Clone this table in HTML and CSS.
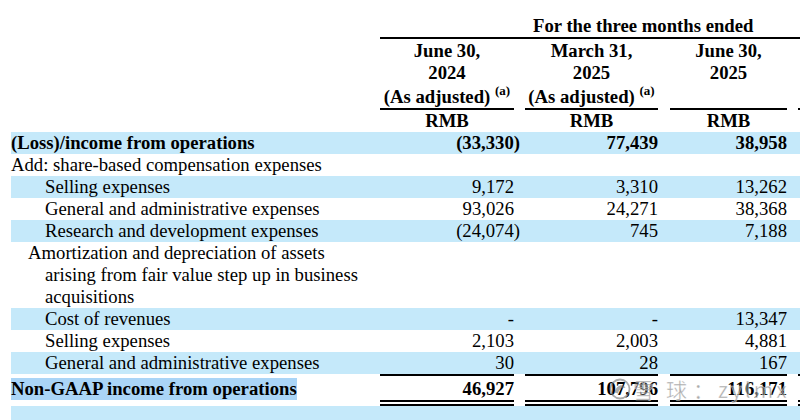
FILE: index.html
```html
<!DOCTYPE html>
<html>
<head>
<meta charset="utf-8">
<link rel="stylesheet" href="styles.css">
</head>
<body>
<div class="page">
<table class="fin">
  <colgroup>
    <col class="w-label"><col class="w-c1"><col class="w-g1"><col class="w-c2"><col class="w-g2"><col class="w-c3"><col class="w-g3"><col class="w-c4">
  </colgroup>
  <tr class="h-top">
    <td></td>
    <td colspan="7" class="period">For the three months ended</td>
  </tr>
  <tr class="h-dates">
    <td></td>
    <td class="hd">June 30,<br>2024<div class="adj">(As adjusted) <sup>(a)</sup></div></td>
    <td></td>
    <td class="hd">March 31,<br>2025<div class="adj">(As adjusted) <sup>(a)</sup></div></td>
    <td></td>
    <td class="hd">June 30,<br>2025<div class="adj">&nbsp;</div></td>
    <td></td>
    <td class="hd"></td>
  </tr>
  <tr class="h-cur">
    <td></td><td class="cur">RMB</td><td></td><td class="cur">RMB</td><td></td><td class="cur">RMB</td><td></td><td></td>
  </tr>
  <tr class="band bold">
    <td class="lbl">(Loss)/income from operations</td>
    <td class="num">(33,330<span class="rp">)</span></td><td></td>
    <td class="num">77,439</td><td></td>
    <td class="num">38,958</td><td></td><td></td>
  </tr>
  <tr>
    <td class="lbl">Add: share-based compensation expenses</td>
    <td></td><td></td><td></td><td></td><td></td><td></td><td></td>
  </tr>
  <tr class="band">
    <td class="lbl l2">Selling expenses</td>
    <td class="num">9,172</td><td></td>
    <td class="num">3,310</td><td></td>
    <td class="num">13,262</td><td></td><td></td>
  </tr>
  <tr>
    <td class="lbl l2">General and administrative expenses</td>
    <td class="num">93,026</td><td></td>
    <td class="num">24,271</td><td></td>
    <td class="num">38,368</td><td></td><td></td>
  </tr>
  <tr class="band">
    <td class="lbl l2">Research and development expenses</td>
    <td class="num">(24,074<span class="rp">)</span></td><td></td>
    <td class="num">745</td><td></td>
    <td class="num">7,188</td><td></td><td></td>
  </tr>
  <tr>
    <td class="lbl l1">Amortization and depreciation of assets<br>arising from fair value step up in business<br>acquisitions</td>
    <td></td><td></td><td></td><td></td><td></td><td></td><td></td>
  </tr>
  <tr class="band">
    <td class="lbl l2">Cost of revenues</td>
    <td class="num">-</td><td></td>
    <td class="num">-</td><td></td>
    <td class="num">13,347</td><td></td><td></td>
  </tr>
  <tr>
    <td class="lbl l2">Selling expenses</td>
    <td class="num">2,103</td><td></td>
    <td class="num">2,003</td><td></td>
    <td class="num">4,881</td><td></td><td></td>
  </tr>
  <tr class="band">
    <td class="lbl l2">General and administrative expenses</td>
    <td class="num">30</td><td></td>
    <td class="num">28</td><td></td>
    <td class="num">167</td><td></td><td></td>
  </tr>
  <tr class="total bold">
    <td class="lbl"><div class="sel">Non-GAAP income from operations</div></td>
    <td class="num">46,927</td><td></td>
    <td class="num">107,796</td><td></td>
    <td class="num">116,171</td><td></td>
    <td class="num"></td>
  </tr>
  <tr class="band">
    <td class="lbl">&nbsp;</td><td></td><td></td><td></td><td></td><td></td><td></td><td></td>
  </tr>
</table>
<div class="wm">
  <svg class="wm-logo" width="22" height="22" viewBox="0 0 22 22"><circle cx="11" cy="11" r="9.5" fill="none" stroke="currentColor" stroke-width="1.8"/><path d="M5.5 14.5 C7.5 6.5, 14.5 5.5, 16.5 10 C13 9, 10 11, 9 15.5 Z" fill="currentColor"/></svg>
  <span class="wm-cn">雪球</span><span class="wm-colon">：</span><span class="wm-id">zylmx</span>
</div>
</div>
</body>
</html>
```
FILE: styles.css
```css
html, body {
  margin: 0;
  padding: 0;
  background: #ffffff;
  overflow: hidden;
}
.page {
  position: relative;
  width: 800px;
  height: 420px;
  overflow: hidden;
  padding-left: 11px;
  box-sizing: border-box;
}
.fin {
  border-collapse: separate;
  border-spacing: 0;
  table-layout: fixed;
  width: 789px;
  font-family: "Liberation Serif", "Times New Roman", serif;
  font-size: 18.7px;
  line-height: 22px;
  color: #000;
}
.fin td {
  padding: 0;
  white-space: nowrap;
  vertical-align: top;
}
.w-label { width: 369px; }
.w-c1 { width: 134px; }
.w-g1 { width: 11px; }
.w-c2 { width: 133px; }
.w-g2 { width: 12px; }
.w-c3 { width: 117px; }
.w-g3 { width: 11px; }
.w-c4 { width: 2px; }

.period {
  font-weight: bold;
  padding: 15px 0 0 153px !important;
  border-bottom: 2px solid #000;
}
.hd {
  font-weight: bold;
  text-align: center;
  border-bottom: 2px solid #000;
  padding-top: 1px !important;
}
.adj {
  margin-top: 2px;
  height: 22px;
}
sup {
  font-size: 13px;
  line-height: 0;
  vertical-align: 8px;
}
.cur {
  font-weight: bold;
  text-align: center;
}
.band td {
  background: #c5e9fa;
}
.bold td {
  font-weight: bold;
}
.num {
  text-align: right;
}
.rp {
  margin-right: -6px;
}
.l1 {
  padding-left: 34px !important;
  text-indent: -17px;
}
.l2 {
  padding-left: 34px !important;
}
.total .num {
  border-top: 2px solid #000;
  border-bottom: 6px double #000;
  padding-top: 2px;
}
.total .lbl {
  padding-top: 4px;
}
.sel {
  width: max-content;
  height: 22px;
  background: #aad5f7;
}
.wm {
  position: absolute;
  left: 609px;
  top: 377px;
  display: flex;
  align-items: center;
  color: rgba(115, 115, 115, 0.6);
  font-family: "Noto Sans CJK SC", "Noto Sans", sans-serif;
  font-size: 21px;
  line-height: 24px;
  -webkit-text-stroke: 0.6px rgba(255, 255, 255, 0.7);
  pointer-events: none;
}
.wm-logo {
  flex: none;
  margin-right: 2px;
}
.wm-cn {
  letter-spacing: 12px;
}
.wm-colon {
  margin-left: -6px;
}
.wm-id {
  margin-left: 4px;
  letter-spacing: 3px;
}
```
